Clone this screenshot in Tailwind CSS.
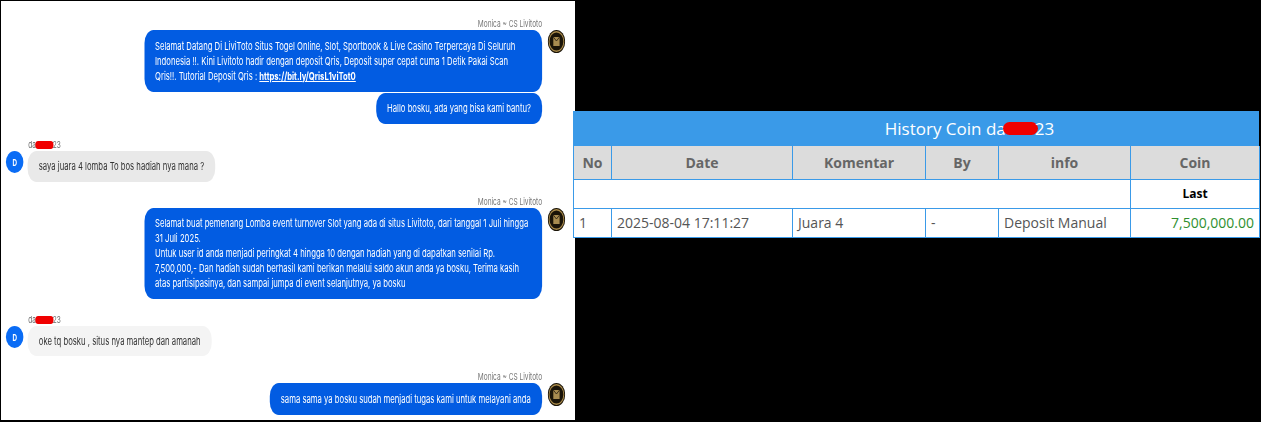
<!DOCTYPE html>
<html>
<head>
<meta charset="utf-8">
<script src="https://cdn.jsdelivr.net/npm/@tailwindcss/browser@4"></script>
</head>
<body class="bg-black">
<div class="flex items-start w-[1261px] h-[422px] overflow-hidden bg-black pl-[1px] pt-[1px]">
  <!-- chat panel -->
  <div class="w-[574px] h-[419px] shrink-0 overflow-hidden bg-white">
    <div class="w-[821px] h-[419px] origin-top-left scale-x-[0.7] blur-[0.4px] flex flex-col font-['Inter',sans-serif] text-[11px] leading-[15px]">

      <div class="pt-[17px] pr-[48px] text-right text-[9.4px] leading-[11px] text-[#777]">Monica ~ CS Livitoto</div>
      <div class="mt-[1px] flex justify-end items-start gap-[8px] pr-[15px]">
        <div class="w-[568px] rounded-[13px] bg-[#025ce2] px-[15px] py-[8.5px] text-white">
          Selamat Datang Di LiviToto Situs Togel Online, Slot, Sportbook &amp; Live Casino Terpercaya Di Seluruh<br>
          Indonesia !!. Kini Livitoto hadir dengan deposit Qris, Deposit super cepat cuma 1 Detik Pakai Scan<br>
          Qris!!. Tutorial Deposit Qris : <a class="font-bold underline">https://bit.ly/QrisL1viTot0</a>
        </div>
        <svg class="w-[25px] h-[23px] shrink-0" viewBox="0 0 25 23"><ellipse cx="12.5" cy="11.5" rx="12.5" ry="11.5" fill="#1a1408"/><ellipse cx="12.5" cy="11.5" rx="10.5" ry="9.8" fill="none" stroke="#a98a4a" stroke-width="1.4"/><rect x="8" y="7" width="9" height="9" fill="#a88c50"/><path d="M8 7l4.500 4 4.500-4" fill="none" stroke="#2a2010" stroke-width="1"/></svg>
      </div>
      <div class="mt-[1px] flex justify-end pr-[48px]">
        <div class="rounded-[13px] bg-[#025ce2] px-[16px] py-[8px] text-white whitespace-nowrap">Hallo bosku, ada yang bisa kami bantu?</div>
      </div>

      <div class="mt-[15px] pl-[39px] text-[9.4px] leading-[11px] text-[#666]">da<span class="inline-block w-[26px] h-[8px] -mx-[1px] rounded-full bg-[#f00000] align-[-1px]"></span>23</div>
      <div class="mt-[1px] flex items-start gap-[6px] pl-[7px]">
        <div class="w-[25px] h-[22px] shrink-0 rounded-[50%] bg-[#0a6cf5] flex items-center justify-center text-white text-[9px] font-bold">D</div>
        <div class="rounded-[13px] bg-[#e9e9e9] px-[16px] py-[8px] text-[#333] whitespace-nowrap">saya juara 4 lomba To bos hadiah nya mana ?</div>
      </div>

      <div class="mt-[14px] pr-[48px] text-right text-[9.4px] leading-[11px] text-[#777]">Monica ~ CS Livitoto</div>
      <div class="mt-[1px] flex justify-end items-start gap-[8px] pr-[15px]">
        <div class="w-[568px] rounded-[13px] bg-[#025ce2] px-[15px] py-[8px] text-white">
          Selamat buat pemenang Lomba event turnover Slot yang ada di situs Livitoto, dari tanggal 1 Juli hingga<br>
          31 Juli 2025.<br>
          Untuk user id anda menjadi peringkat 4 hingga 10 dengan hadiah yang di dapatkan senilai Rp.<br>
          7,500,000,- Dan hadiah sudah berhasil kami berikan melalui saldo akun anda ya bosku, Terima kasih<br>
          atas partisipasinya, dan sampai jumpa di event selanjutnya, ya bosku
        </div>
        <svg class="w-[25px] h-[23px] shrink-0" viewBox="0 0 25 23"><ellipse cx="12.500" cy="11.5" rx="12.5" ry="11.500" fill="#1a1408"/><ellipse cx="12.5" cy="11.5" rx="10.5" ry="9.8" fill="none" stroke="#a98a4a" stroke-width="1.4"/><rect x="8" y="7" width="9" height="9" fill="#a88c50"/><path d="M8 7l4.500 4 4.500-4" fill="none" stroke="#2a2010" stroke-width="1"/></svg>
      </div>

      <div class="mt-[15px] pl-[39px] text-[9.4px] leading-[11px] text-[#666]">da<span class="inline-block w-[26px] h-[8px] -mx-[1px] rounded-full bg-[#f00000] align-[-1px]"></span>23</div>
      <div class="mt-[1px] flex items-start gap-[6px] pl-[7px]">
        <div class="w-[25px] h-[22px] shrink-0 rounded-[50%] bg-[#0a6cf5] flex items-center justify-center text-white text-[9px] font-bold">D</div>
        <div class="rounded-[13px] bg-[#f4f4f4] px-[16px] py-[7.5px] text-[#333] whitespace-nowrap">oke tq bosku , situs nya mantep dan amanah</div>
      </div>

      <div class="mt-[15px] pr-[48px] text-right text-[9.4px] leading-[11px] text-[#777]">Monica ~ CS Livitoto</div>
      <div class="mt-[1px] flex justify-end items-start gap-[8px] pr-[15px]">
        <div class="rounded-[13px] bg-[#025ce2] px-[16px] py-[8.5px] text-white whitespace-nowrap">sama sama ya bosku sudah menjadi tugas kami untuk melayani anda</div>
        <svg class="w-[25px] h-[23px] shrink-0" viewBox="0 0 25 23"><ellipse cx="12.500" cy="11.5" rx="12.5" ry="11.500" fill="#1a1408"/><ellipse cx="12.5" cy="11.5" rx="10.5" ry="9.8" fill="none" stroke="#a98a4a" stroke-width="1.4"/><rect x="8" y="7" width="9" height="9" fill="#a88c50"/><path d="M8 7l4.500 4 4.500-4" fill="none" stroke="#2a2010" stroke-width="1"/></svg>
      </div>
    </div>
  </div>

  <!-- coin history -->
  <div class="relative z-10 -ml-[2px] mt-[110px] w-[686px] shrink-0 bg-white font-['Open_Sans',sans-serif]">
    <div class="h-[35px] pl-[107px] bg-[#3a9ae8] flex items-center justify-center text-white text-[17px] font-normal">History Coin da<span class="inline-block w-[35px] h-[13px] -mx-[3px] rounded-full bg-[#f00000]"></span>23</div>
    <table class="w-[686px] table-fixed border-collapse text-[14px] text-[#555]">
      <colgroup>
        <col class="w-[38px]"><col class="w-[181px]"><col class="w-[133px]"><col class="w-[73px]"><col class="w-[132px]"><col class="w-[129px]">
      </colgroup>
      <thead>
        <tr class="h-[33px] bg-[#dcdcdc] text-[#666] font-bold">
          <th class="border border-[#3a9ae8] border-t-0">No</th>
          <th class="border border-[#3a9ae8] border-t-0">Date</th>
          <th class="border border-[#3a9ae8] border-t-0">Komentar</th>
          <th class="border border-[#3a9ae8] border-t-0">By</th>
          <th class="border border-[#3a9ae8] border-t-0">info</th>
          <th class="border border-[#3a9ae8] border-t-0">Coin</th>
        </tr>
      </thead>
      <tbody>
        <tr class="h-[29px]">
          <td colspan="5" class="border border-[#3a9ae8]"></td>
          <td class="border border-[#3a9ae8] text-center text-[12px] font-bold text-black">Last</td>
        </tr>
        <tr class="h-[29px]">
          <td class="border border-[#3a9ae8] px-[5px]">1</td>
          <td class="border border-[#3a9ae8] px-[5px] whitespace-nowrap">2025-08-04 17:11:27</td>
          <td class="border border-[#3a9ae8] px-[5px]">Juara 4</td>
          <td class="border border-[#3a9ae8] px-[5px]">-</td>
          <td class="border border-[#3a9ae8] px-[5px] whitespace-nowrap">Deposit Manual</td>
          <td class="border border-[#3a9ae8] px-[5px] text-right text-[#2f8f2f] whitespace-nowrap">7,500,000.00</td>
        </tr>
      </tbody>
    </table>
  </div>
</div>
</body>
</html>
